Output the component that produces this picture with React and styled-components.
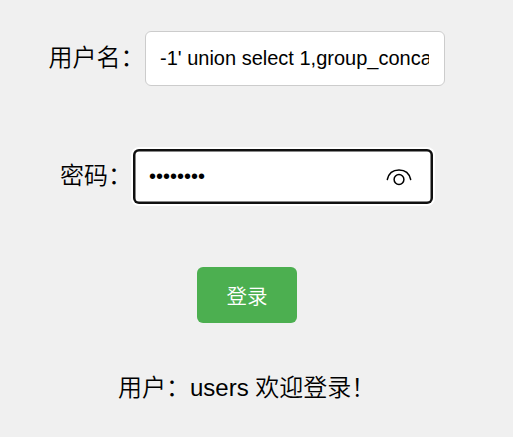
import React from 'react';
import styled, { createGlobalStyle, css } from 'styled-components';

const Global = createGlobalStyle`
  *{box-sizing:border-box}
  body{margin:0;background:#f0f0f0;color:#000;font-family:"Liberation Sans","Noto Sans CJK SC",sans-serif;font-weight:350}
`;
const Form = styled.main`
  width:513px;height:437px;overflow:hidden;display:flex;flex-direction:column;align-items:flex-start;padding-top:31px;
`;
const Row = styled.div`
  display:flex;align-items:center;height:55px;margin-left:${p => p.$left}px;margin-bottom:63px;
`;
const Label = styled.label`
  width:${p => p.$width}px;font-size:24px;line-height:36px;white-space:nowrap;flex:none;padding-bottom:1px;
`;
const Field = styled.div`
  width:300px;height:55px;display:flex;align-items:center;justify-content:space-between;
  background:#fff;border-radius:6px;
  ${p => p.$focused ? css`
    padding:0 20px 0 16px;
    box-shadow:0 0 0 2px #fff,inset 0 0 0 2.5px #101010;
  ` : css`
    padding:0 15px 0 14px;
    border:1px solid #ccc;
  `}
`;
const Input = styled.input`
  width:${p => p.$width}px;border:0;outline:0;padding:0;background:transparent;color:#000;
  font-family:"Liberation Sans",sans-serif;font-size:20px;
`;
const Button = styled.button`
  width:100px;height:56px;padding:0;margin-left:197px;border:0;border-radius:6px;background:#4caf50;color:#fff;
  font-family:"Liberation Sans","Noto Sans CJK SC",sans-serif;font-size:20.5px;font-weight:350;
`;
const Message = styled.p`
  margin:47px 0 0 118px;font-size:24px;line-height:36px;white-space:nowrap;
`;
const EyeIcon = styled.svg`
  flex:none;width:28px;height:18px;
`;
const Eye = () => (
  <EyeIcon viewBox="0 0 28 18" fill="none" stroke="#000" strokeWidth="1.5">
    <path d="M2.3 11.5C3.6 5.4 8.2 1.9 14 1.9S24.4 5.4 25.7 11.5" strokeLinecap="round" />
    <circle cx="14" cy="11.5" r="4.9" />
  </EyeIcon>
);
export default function App() {
  return <><Global /><Form>
    <Row $left={48.5}><Label $width={96.5} htmlFor="user">用户名：</Label><Field><Input id="user" $width={269} defaultValue="-1' union select 1,group_concat" /></Field></Row>
    <Row $left={60}><Label $width={73} htmlFor="pass">密码：</Label><Field $focused><Input id="pass" type="password" $width={200} defaultValue="password" /><Eye /></Field></Row>
    <Button>登录</Button>
    <Message>用户：users 欢迎登录！</Message>
  </Form></>;
}
